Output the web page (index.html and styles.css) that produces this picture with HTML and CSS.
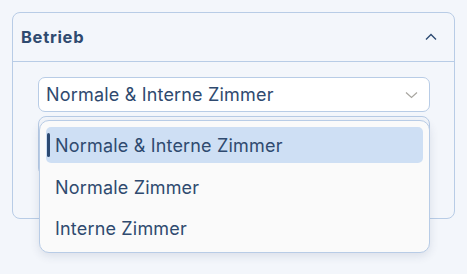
FILE: index.html
```html
<!DOCTYPE html>
<html lang="de">
<head>
<meta charset="utf-8">
<link rel="stylesheet" href="styles.css">
</head>
<body>
<div class="card">
  <div class="card-head">
    <span class="title">Betrieb</span>
    <svg class="chev-up" width="12" height="8" viewBox="0 0 12 8"><path d="M1 6.5 L6 1.5 L11 6.5" fill="none" stroke="#2d4a72" stroke-width="1.4"/></svg>
  </div>
  <div class="card-body">
    <div class="select">
      <span class="select-text">Normale &amp; Interne Zimmer</span>
      <svg class="chev-down" width="13" height="8" viewBox="0 0 13 8"><path d="M1 1.5 L6.5 6.5 L12 1.5" fill="none" stroke="#a8a6a0" stroke-width="1.2"/></svg>
    </div>
  </div>
</div>
<div class="ghost"></div>
<div class="menu">
  <div class="item active">Normale &amp; Interne Zimmer</div>
  <div class="item">Normale Zimmer</div>
  <div class="item">Interne Zimmer</div>
</div>
</body>
</html>
```
FILE: styles.css
```css
html, body { margin: 0; padding: 0; }
body {
  background: #f3f6fb;
  font-family: Inter, "Open Sans", sans-serif;
  color: #2f4a6f;
  width: 467px;
  height: 274px;
  position: relative;
  overflow: hidden;
}
.card {
  margin: 12px 0 0 12px;
  width: 441px;
  height: 205px;
  border: 1px solid #b8cce6;
  border-radius: 8px;
  background: #f3f6fb;
  box-sizing: content-box;
}
.card-head {
  height: 48px;
  border-bottom: 1px solid #b8cce6;
  display: flex;
  align-items: center;
  justify-content: space-between;
  padding: 0 17px 0 8px;
}
.title {
  font-weight: 700;
  font-size: 16.5px;
  letter-spacing: 0.7px;
  color: #2f4a6f;
}
.chev-up { display: block; }
.card-body {
  padding: 15px 0 0 25px;
}
.select {
  border: 1px solid #b8cce6;
  border-radius: 7px;
  background: #fff;
  display: flex;
  align-items: center;
  justify-content: space-between;
  padding: 0 11px 0 7px;
  box-sizing: border-box;
  width: 392px;
  height: 35px;
}
.select-text { font-size: 18px; letter-spacing: 0.18px; color: #2f4a6f; }
.chev-down { display: block; }
.ghost {
  position: absolute;
  left: 38px;
  top: 116px;
  width: 392px;
  height: 60px;
  border: 1px solid #b8cce6;
  border-radius: 8px;
  box-sizing: border-box;
  background: #f3f6fb;
}
.menu {
  position: absolute;
  left: 39px;
  top: 120px;
  width: 391px;
  height: 133px;
  box-sizing: border-box;
  background: #fafafa;
  border: 1px solid #b8cce6;
  border-radius: 10px;
  box-shadow: 0 3px 10px rgba(40, 60, 100, 0.12);
  padding: 6px;
  display: flex;
  flex-direction: column;
  gap: 6px;
}
.item {
  height: 36px;
  display: flex;
  align-items: center;
  padding: 1px 0 0 9px;
  box-sizing: border-box;
  font-size: 18px;
  letter-spacing: 0.18px;
  color: #2f4a6f;
  border-radius: 5px;
  position: relative;
}
.item.active { background: #cedff4; }
.item.active::before {
  content: "";
  position: absolute;
  left: 1px;
  top: 6px;
  width: 3px;
  height: 24px;
  border-radius: 2px;
  background: #2d4a72;
}
```
